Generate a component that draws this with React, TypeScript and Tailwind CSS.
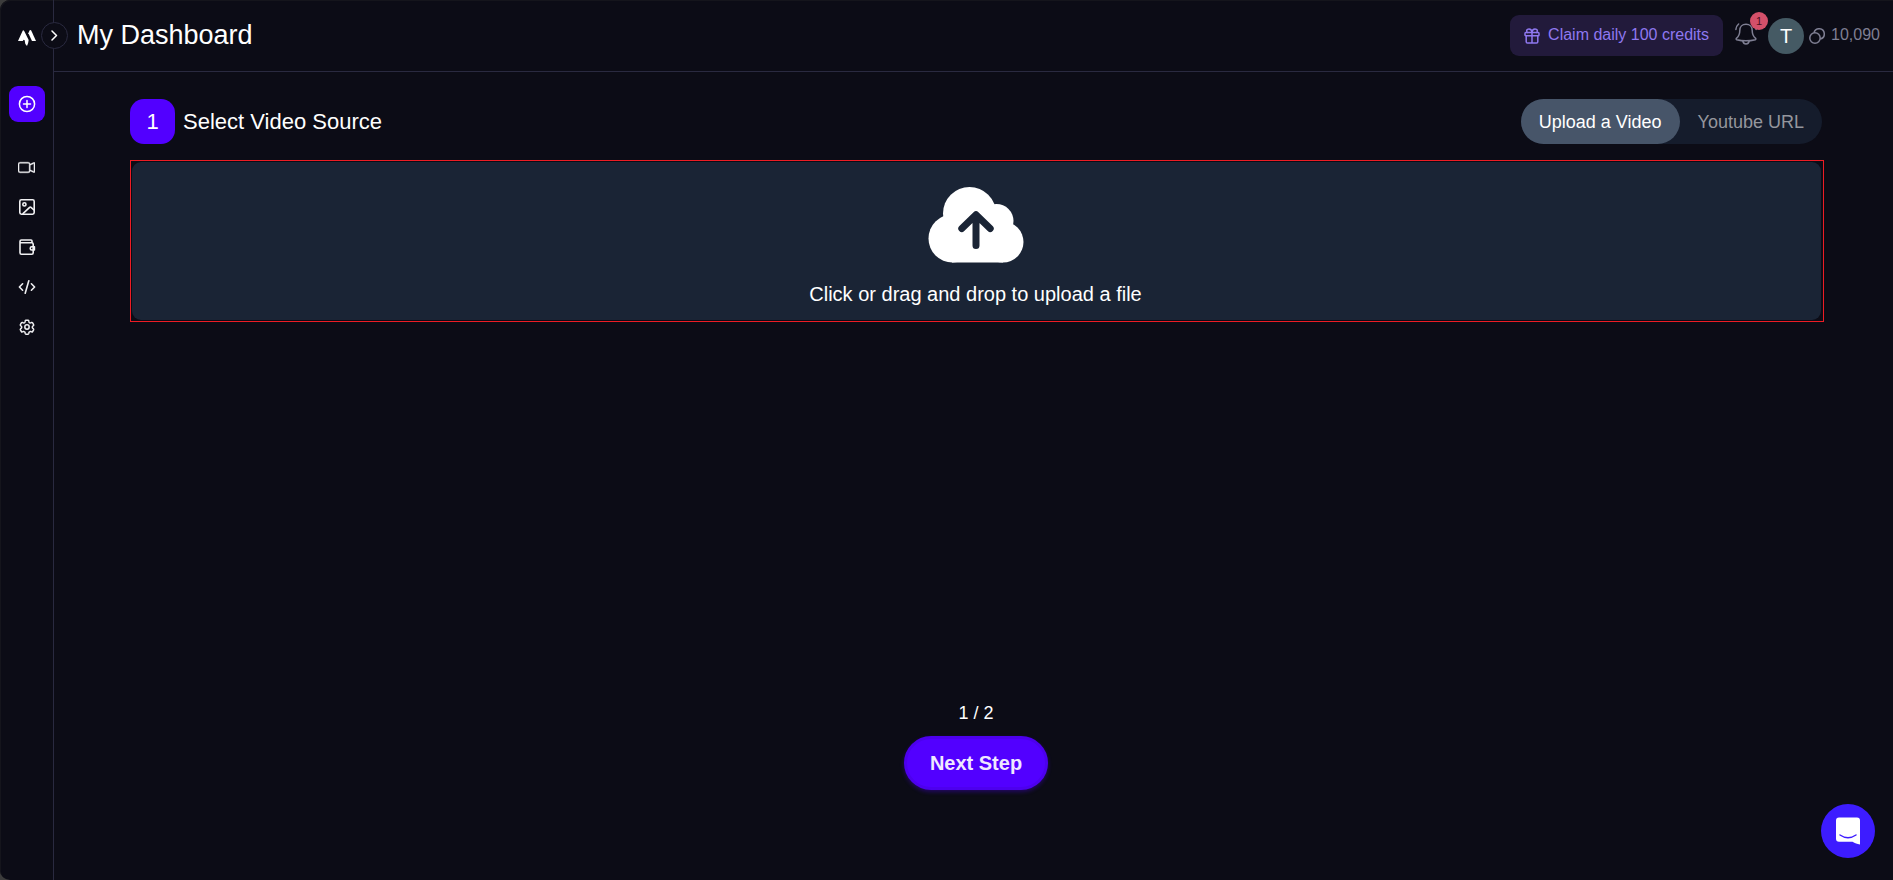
import React, { useState } from 'react';
import { BsCameraVideo } from 'react-icons/bs';

const Logo = () => (
  <svg width="18" height="16" viewBox="0 0 54 48" fill="#fff">
    <path d="M0 33 L14 2 Q16 -1 19 4 L32 30 Q31 41 27 48 L22 42 L20 31 L17 29 L14 33 Z" />
    <path d="M31 10 L35 1 Q38 -1 40 2 L54 33 L42 33 Z" />
  </svg>
);

const PlusIcon = () => (
  <svg width="18" height="18" viewBox="0 0 18 18" fill="none" stroke="#fff" strokeWidth="1.5" strokeLinecap="round">
    <circle cx="9" cy="9" r="7.6" />
    <path d="M9 5.5v7M5.5 9h7" />
  </svg>
);

const ImageIcon = () => (
  <svg width="18" height="18" viewBox="0 0 18 18" fill="none" stroke="currentColor" strokeWidth="1.6" strokeLinecap="round" strokeLinejoin="round">
    <rect x="1.8" y="1.8" width="14.4" height="14.4" rx="1.6" />
    <circle cx="6.4" cy="6.4" r="1.6" />
    <path d="M5 15.6 11.6 9.3 Q12.3 8.7 13 9.3 L16 12" />
  </svg>
);

const WalletIcon = () => (
  <svg width="18" height="18" viewBox="0 0 18 18" fill="none" stroke="currentColor" strokeWidth="1.6" strokeLinejoin="round">
    <path d="M14 4.8V3q0-1-1-1H3.4Q2 2 2 3.4v11.4q0 1.4 1.4 1.4h10.4q1.4 0 1.4-1.4V6.2q0-1.4-1.4-1.4H3.4Q2 4.8 2 3.4" />
    <path d="M16.4 8.8h-2.600a1.600 1.600 0 0 0 0 3.200h2.600z" />
  </svg>
);

const CodeIcon = () => (
  <svg width="18" height="18" viewBox="0 0 18 18" fill="none" stroke="currentColor" strokeWidth="1.6" strokeLinecap="round" strokeLinejoin="round">
    <path d="M4.6 5.8 1.4 9l3.2 3.2M13.4 5.8 16.6 9l-3.2 3.2M10.8 2.8 7.2 15.2" />
  </svg>
);

const SettingsIcon = () => (
  <svg width="18" height="18" viewBox="0 0 24 24" fill="none" stroke="currentColor" strokeWidth="2" strokeLinecap="round" strokeLinejoin="round">
    <path d="M9.6 3.9c.1-.5.6-.9 1.1-.9h2.6c.5 0 1 .4 1.1.9l.2 1.3c.1.4.3.7.6.9l.6.3c.3.2.7.2 1.1.1l1.2-.5c.5-.2 1.1 0 1.4.5l1.3 2.2c.3.5.2 1.1-.3 1.5l-1 .8c-.3.2-.4.6-.4 1v.5c0 .4.1.8.4 1l1 .8c.4.4.5 1 .3 1.5l-1.3 2.2c-.3.5-.9.7-1.4.5l-1.2-.5c-.4-.1-.8-.1-1.1.1l-.6.3c-.3.2-.5.5-.6.9l-.2 1.3c-.1.5-.6.9-1.1.9h-2.6c-.5 0-1-.4-1.1-.9l-.2-1.3c-.1-.4-.3-.7-.6-.9l-.6-.3c-.3-.2-.7-.2-1.1-.1l-1.2.5c-.5.2-1.1 0-1.4-.5l-1.3-2.2c-.3-.5-.2-1.1.3-1.5l1-.8c.3-.2.4-.6.4-1v-.5c0-.4-.1-.8-.4-1l-1-.8c-.4-.4-.5-1-.3-1.5l1.3-2.2c.3-.5.9-.7 1.4-.5l1.2.5c.4.1.8.1 1.1-.1l.6-.3c.3-.2.5-.5.6-.9z" />
    <circle cx="12" cy="12" r="2.9" />
  </svg>
);

const GiftIcon = () => (
  <svg width="16" height="16" viewBox="0 0 16 16" fill="none" stroke="currentColor" strokeWidth="1.5" strokeLinecap="round" strokeLinejoin="round">
    <rect x="1" y="4.6" width="14" height="3.2" rx=".8" />
    <path d="M2.2 7.8v6q0 1.3 1.3 1.3h9q1.3 0 1.3-1.3v-6M8 4.6v10.4" />
    <path d="M8 4.4C7.8 2 6.4.9 5 .9 2.6.9 2 3 3.3 4.4M8 4.4C8.2 2 9.6.9 11 .9 13.4.9 14 3 12.7 4.4" />
  </svg>
);

const BellIcon = () => (
  <svg width="22" height="22" viewBox="0 0 22 22" fill="none" stroke="currentColor" strokeWidth="1.5" strokeLinecap="round" strokeLinejoin="round">
    <path d="M11 1.2c-3.8 0-6.2 2.6-6.2 6.2 0 3.6-.9 5.7-3.4 8-.5.5-.3 1.1.3 1.3 6 1.5 12.6 1.5 18.6 0 .6-.2.8-.8.3-1.3-2.5-2.3-3.4-4.4-3.4-8 0-3.6-2.4-6.2-6.2-6.2z" />
    <path d="M7.8 18c.4 1.9 1.7 3 3.2 3s2.8-1.1 3.2-3" />
    <path d="M.9 6.4C1 4.4 2 2.4 3.6 1M21.1 6.4C21 4.4 20 2.4 18.4 1" />
  </svg>
);

const CoinsIcon = () => (
  <svg width="16" height="16" viewBox="0 0 16 16" fill="none" stroke="currentColor" strokeWidth="1.5">
    <circle cx="6" cy="10" r="5.2" />
    <path d="M5 4.9a5.2 5.2 0 1 1 6.2 6.1" />
  </svg>
);

const CloudIcon = () => (
  <svg width="96" height="76" viewBox="0 0 96 76" fill="#fff">
    <circle cx="24.5" cy="51.5" r="24" />
    <circle cx="41.5" cy="26.5" r="26.5" />
    <circle cx="68.5" cy="34" r="17" />
    <circle cx="75" cy="55" r="20.5" />
    <rect x="24" y="28" width="51" height="47.5" />
    <path d="M48 58.5V28M33.8 41.5 48 27.7 62.2 41.5" fill="none" stroke="#1a2435" strokeWidth="7" strokeLinecap="round" strokeLinejoin="round" />
  </svg>
);

const ChatIcon = () => (
  <svg width="26" height="28" viewBox="0 0 26 28">
    <path d="M4 .5h18q3 0 3 3v24c-3-.5-5-1.5-7.5-2.8H4q-3 0-3-3V3.5q0-3 3-3z" fill="#fff" />
    <path d="M5 18q8 5.5 16 0" fill="none" stroke="#3d1cff" strokeWidth="1.5" strokeLinecap="round" />
  </svg>
);

const links = [
  { name: 'Videos', icon: <BsCameraVideo size={17} strokeWidth={0.4} /> },
  { name: 'Images', icon: <ImageIcon /> },
  { name: 'Billing', icon: <WalletIcon /> },
  { name: 'API', icon: <CodeIcon /> },
  { name: 'Settings', icon: <SettingsIcon /> },
];

const Sidebar = () => (
  <aside className="relative w-[54px] shrink-0 border-r border-[#2a2a40] flex flex-col items-center">
    <a href="#home" aria-label="Home" className="mt-[30px]"><Logo /></a>
    <button aria-label="Expand menu" className="absolute top-[22px] -right-[15px] z-10 size-[27px] rounded-full border border-[#2a2a40] bg-[#0c0c16] flex items-center justify-center">
      <svg width="7" height="11" viewBox="0 0 7 11" fill="none" stroke="#fff" strokeWidth="1.5" strokeLinecap="round" strokeLinejoin="round"><path d="M1 1l4.5 4.5L1 10" /></svg>
    </button>
    <button aria-label="Create" className="mt-10 size-9 rounded-[9px] bg-[#5200ff] flex items-center justify-center"><PlusIcon /></button>
    <nav className="mt-[25px] flex flex-col text-[#f0f0f2]">
      {links.map((link) => (
        <a key={link.name} href="#" aria-label={link.name} className="h-10 w-9 flex items-center justify-center">{link.icon}</a>
      ))}
    </nav>
  </aside>
);

const Header = () => (
  <header className="h-18 border-b border-[#2a2a40] pl-[23px] pr-[13px] flex items-center justify-between">
    <h1 className="text-[27px] leading-8 text-white pb-[2px]">My Dashboard</h1>
    <div className="flex items-center text-[#7f7f93]">
      <button className="h-[41px] px-[14px] rounded-[9px] bg-[#221a3b] text-[#8f78f0] text-base flex items-center gap-2">
        <GiftIcon />
        <span className="pb-[2px]">Claim daily 100 credits</span>
      </button>
      <button aria-label="Notifications" className="relative ml-3 mb-1">
        <BellIcon />
        <span className="absolute -top-[11px] -right-[11px] size-[18px] rounded-full bg-[#d4506a] text-[#4a0f20] text-[11px] leading-[18px]">1</span>
      </button>
      <button className="ml-[11px] size-9 rounded-full bg-[#455a64] text-white text-xl leading-9 text-center">T</button>
      <div className="ml-[5px] flex items-center gap-[6px] text-base">
        <CoinsIcon />
        <span className="pb-[2px]">10,090</span>
      </div>
    </div>
  </header>
);

export default function App() {
  const [source, setSource] = useState<string>('upload')

  return (
    <div className="min-h-screen bg-[#3c3c3c] flex font-['Liberation_Sans',Arial,sans-serif]">
      <div className="flex-1 flex rounded-l-[10px] bg-[#0c0c16] shadow-[inset_1px_1px_0_#15151c]">
        <Sidebar />
        <div className="flex-1 flex flex-col">
          <Header />
          <main className="flex-1 flex flex-col pl-[76px] pr-[69px] pt-[27px] pb-[90px]">
            <div className="flex items-center justify-between pr-[2px]">
              <div className="flex items-center gap-2 text-[22px] text-white">
                <span className="size-[45px] rounded-[14px] bg-[#5200ff] flex items-center justify-center">1</span>
                <h2>Select Video Source</h2>
              </div>
              <div className="h-[45px] rounded-full bg-[#151c2c] flex text-lg font-medium">
                <button onClick={() => setSource('upload')} className={`px-[18px] rounded-full ${source === 'upload' ? 'bg-[#475569] text-white' : 'text-[#94969d]'}`}>Upload a Video</button>
                <button onClick={() => setSource('youtube')} className={`px-[18px] rounded-full ${source === 'youtube' ? 'bg-[#475569] text-white' : 'text-[#94969d]'}`}>Youtube URL</button>
              </div>
            </div>

            {/* Upload zone */}
            <div className="mt-4 border border-[#ed1c24] py-px pl-px pr-[2px]">
              <label htmlFor="video" className="h-[158px] rounded-[9px] bg-[#1a2435] flex flex-col items-center pt-[25px] pr-[2px] text-xl leading-7 text-white cursor-pointer">
                <CloudIcon />
                <span className="mt-[17px]">Click or drag and drop to upload a file</span>
              </label>
              <input type="file" id="video" className="sr-only" />
            </div>

            <div className="mt-auto pr-[2px] flex flex-col items-center">
              <p className="text-lg leading-6 text-white mb-[11px]">1 / 2</p>
              <button className="h-[54px] px-[23px] rounded-full border-3 border-[#4d00ee] bg-[#5200ff] text-[#efe9ff] text-xl font-bold shadow-[0_2px_4px_#5200ff55]">Next Step</button>
            </div>
          </main>
        </div>
      </div>
      <button aria-label="Open chat" className="fixed right-[18px] bottom-[22px] size-[54px] rounded-full bg-[#3d1cff] flex items-center justify-center"><ChatIcon /></button>
    </div>
  );
}
